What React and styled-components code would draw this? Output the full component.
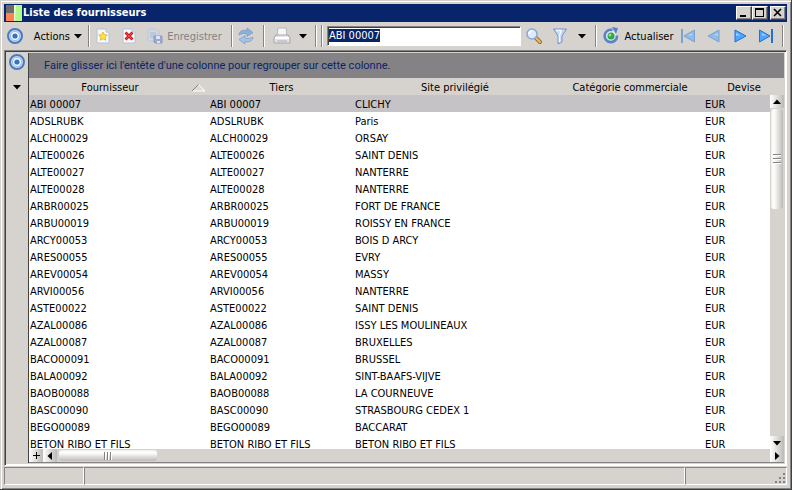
import { createGlobalStyle, styled } from "styled-components";

const PageStyle = createGlobalStyle`
  *, *::before, *::after {
    box-sizing: border-box;
  }
  body {
    margin: 0;
    background: #d6d3ce;
  }
  button, input, table {
    font: inherit;
    color: inherit;
  }
  button {
    padding: 0;
    border: 0;
    background: none;
  }
`

const Window = styled.div`
  display: flex;
  flex-direction: column;
  height: 100vh;
  padding: 4px;
  background: #d6d3ce;
  border-right: 1px solid #424142;
  border-bottom: 1px solid #424142;
  box-shadow: inset 1px 1px 0 #d6d3ce, inset 2px 2px 0 #fff, inset -1px -1px 0 #848284;
  font-family: "DejaVu Sans Condensed", Tahoma, "DejaVu Sans", sans-serif;
  font-size: 11px;
  line-height: 17px;
  color: #000;
`

const TitleBar = styled.header`
  display: flex;
  align-items: center;
  flex: none;
  height: 18px;
  padding: 0 1px 0 2px;
  background: #08246b;
  color: #fff;
  h1 {
    flex: 1;
    margin: 0 0 0 1px;
    font-size: 11px;
    line-height: 18px;
  }
`

const CaptionButton = styled.button`
  display: flex;
  width: 16px;
  height: 14px;
  margin-left: ${({ $apart }) => ($apart ? "2px" : "0")};
  background: #d6d3ce;
  border: 1px solid;
  border-color: #fff #424142 #424142 #fff;
  box-shadow: inset -1px -1px 0 #848284;
`

const ToolBar = styled.div`
  display: flex;
  align-items: center;
  flex: none;
  height: 28px;
  padding: 0 0 0 2px;
`

const ToolButton = styled.button`
  display: flex;
  align-items: center;
  justify-content: ${({ $end }) => ($end ? "flex-end" : "center")};
  flex: none;
  gap: 4px;
  min-width: ${({ $width }) => $width || 18}px;
  height: ${({ $small }) => ($small ? 18 : 22)}px;
  padding-right: ${({ $end }) => ($end ? 6 : 0)}px;
  white-space: nowrap;
  color: ${({ disabled }) => (disabled ? "#848284" : "#000")};
`

const Separator = styled.span`
  flex: none;
  width: 2px;
  height: 22px;
  margin: 0 ${({ $space }) => $space}px;
  border-left: 1px solid #848284;
  border-right: 1px solid #fff;
`

const SearchBox = styled.input`
  flex: 1;
  min-width: 60px;
  height: 20px;
  padding: 0 1px 2px;
  border: 1px solid;
  border-color: #848284 #fff #fff #848284;
  border-radius: 0;
  outline: 0;
  background: #fff;
  box-shadow: inset 1px 1px 0 #424142;
  &::selection {
    background: #08246b;
    color: #fff;
  }
`

const Panel = styled.main`
  display: flex;
  flex: 1;
  min-height: 0;
  border: 1px solid;
  border-color: #848284 #fff #fff #848284;
  box-shadow: inset 1px 1px 0 #424142, inset -1px -1px 0 #fff;
  padding: 2px 2px 2px 1px;
`

const SideStrip = styled.aside`
  display: flex;
  flex-direction: column;
  gap: 7px;
  flex: none;
  width: 23px;
  border-right: 1px solid #424142;
`

const Grid = styled.section`
  display: flex;
  flex-direction: column;
  flex: 1;
  min-width: 0;
`

const GroupBar = styled.div`
  flex: none;
  height: 25px;
  padding: 0 15px;
  line-height: 26px;
  background: #848284;
  color: #08246b;
  font-family: Roboto, "Liberation Sans", sans-serif;
`

const GridBody = styled.div`
  display: grid;
  flex: 1;
  min-height: 0;
  grid-template-columns: minmax(0, 1fr) 14px;
  grid-template-rows: 17px minmax(0, 1fr) 14px;
`

const TableArea = styled.div`
  grid-area: 1 / 1 / 3 / 3;
  overflow: hidden;
  background: #fff;
`

const Table = styled.table`
  width: 100%;
  table-layout: fixed;
  border-collapse: collapse;
  th, td {
    height: 17px;
    padding: 2px 1px 0;
    line-height: 15px;
    white-space: nowrap;
  }
  th {
    background: #d6d3ce;
    font-weight: normal;
  }
`

const Row = styled.tr`
  background: ${({ $selected }) => ($selected ? "#c6c3c6" : "#fff")};
`

const SortHeader = styled.div`
  display: flex;
  align-items: center;
  span {
    flex: 1;
  }
`

const VScroll = styled.div`
  grid-area: 2 / 2 / 3 / 3;
  display: flex;
  flex-direction: column;
  background: #d6d3ce;
`

const HScroll = styled.div`
  grid-area: 3 / 1 / 4 / 3;
  display: flex;
  background: #d6d3ce;
  border-bottom: 1px solid #848284;
`

const ScrollButton = styled.button`
  display: flex;
  align-items: center;
  justify-content: center;
  flex: none;
  width: 14px;
  height: 13px;
  background: linear-gradient(90deg, #fff, #bdbab5);
`

const Thumb = styled.div`
  display: flex;
  flex-direction: ${({ $vertical }) => ($vertical ? "column" : "row")};
  align-items: center;
  justify-content: center;
  gap: ${({ $vertical }) => ($vertical ? "2px" : "1px")};
  flex: none;
  width: ${({ $vertical }) => ($vertical ? "12px" : "98px")};
  height: ${({ $vertical }) => ($vertical ? "100px" : "11px")};
  margin: ${({ $vertical }) => ($vertical ? "1px 1px auto" : "1px auto 1px 2px")};
  border-radius: 3px;
  background: linear-gradient(${({ $vertical }) => ($vertical ? "90deg" : "180deg")}, #efefea, #fff 25%, #bdbab5);
  i {
    width: ${({ $vertical }) => ($vertical ? "8px" : "2px")};
    height: ${({ $vertical }) => ($vertical ? "2px" : "8px")};
    background: linear-gradient(${({ $vertical }) => ($vertical ? "180deg" : "90deg")}, #848284 50%, #fff 50%);
  }
`

const StatusBar = styled.footer`
  display: grid;
  grid-template-columns: 80px 1fr 102px;
  flex: none;
  height: 18px;
  margin-top: 1px;
`

const StatusCell = styled.div`
  display: flex;
  align-items: flex-end;
  justify-content: flex-end;
  border: 1px solid;
  border-color: #848284 #fff #fff #848284;
`

const AppLogo = () => (
  <svg width="16" height="16" viewBox="0 0 16 16">
    <path fill="#6b6b6b" d="M0 0h8v8H0z" />
    <path fill="#ff8252" d="M0 8h8v8H0z" />
    <path fill="#b5f78c" d="M8 0h8v16H8z" />
    <path fill="#e7ffce" d="M8 0h2L9 16H8z" />
  </svg>
)

const Target = () => (
  <svg width="18" height="18" viewBox="0 0 18 18">
    <circle cx="9" cy="9" r="7" fill="#c6dbf7" stroke="#4a79bd" strokeWidth="2" />
    <circle cx="9" cy="9" r="4.6" fill="#eff7ff" stroke="#9cbae7" />
    <circle cx="9" cy="9" r="2.6" fill="#3971bd" />
  </svg>
)

// small black triangle used by menus and scroll bars
const Caret = ({ dir = "down", size = 8 }) => {
  const turn = { down: 0, left: 90, up: 180, right: 270 }[dir]
  return (
    <svg width={size} height={size} viewBox="0 0 8 8">
      <path d="M0 2h8L4 6.500z" transform={`rotate(${turn} 4 4)`} />
    </svg>
  )
}

const NewIcon = () => (
  <svg width="16" height="16" viewBox="0 0 16 16">
    <path d="M2 1h9l3 3v11H2z" fill="#f3f8fe" stroke="#b5c3d6" />
    <path d="M11 1v3h3" fill="#dce7f5" stroke="#b5c3d6" />
    <path d="m8 4 1.300 2.700 3 .4-2.200 2.100.6 3L8 10.800l-2.700 1.400.6-3-2.200-2.100 3-.4z" fill="#ffe442" stroke="#e0b020" strokeWidth=".8" />
  </svg>
)

const DeleteIcon = () => (
  <svg width="16" height="16" viewBox="0 0 16 16">
    <path d="M2 1h9l3 3v11H2z" fill="#f3f8fe" stroke="#b5c3d6" />
    <path d="M11 1v3h3" fill="#dce7f5" stroke="#b5c3d6" />
    <path d="m4.500 4.500 7 7m0-7-7 7" stroke="#ce1818" strokeWidth="2.800" />
    <path d="m5 5 6 6m0-6-6 6" stroke="#f75a52" strokeWidth=".8" />
  </svg>
)

const SaveIcon = () => (
  <svg width="16" height="16" viewBox="0 0 16 16">
    <path d="M1 1h8l3 3v9H1z" fill="#ced7e7" stroke="#bdc7d9" />
    <path d="M3 5h6M3 7h6M3 9h5" stroke="#adb8cc" />
    <path d="M7 8h8v7H8l-1-1z" fill="#9ca9ce" stroke="#8c9ac0" />
    <path d="M9 8h4v3H9zM10 13h3v2h-3z" fill="#dee3f0" />
  </svg>
)

const SyncIcon = () => (
  <svg width="18" height="18" viewBox="0 0 18 18">
    <path d="M2 8C2 4 6 2.500 10 3.500V1l6 4.500-6 4V7C7 6 5 6.500 2 8z" fill="#8cb0dc" stroke="#7399c9" strokeWidth=".7" />
    <path d="M16 10c0 4-4 5.500-8 4.500V17l-6-4.500 6-4V11c3 1 5 .5 8-1z" fill="#a5c3e7" stroke="#7399c9" strokeWidth=".7" />
  </svg>
)

const PrintIcon = () => (
  <svg width="18" height="18" viewBox="0 0 18 18">
    <path d="M5 1h8l1 8H4z" fill="#f7f7f7" stroke="#b5b6bd" />
    <path d="M3 8h12l2 3v5H1v-5z" fill="#e4e4e7" stroke="#a5a5ad" />
    <path d="M2 11h14" stroke="#fff" strokeWidth="2" />
    <path d="M4 14h10" stroke="#adaeb5" />
  </svg>
)

const SearchIcon = () => (
  <svg width="18" height="18" viewBox="0 0 18 18">
    <path d="m10 10 5 5" stroke="#8c7142" strokeWidth="4" strokeLinecap="round" />
    <path d="m11 11 4 4" stroke="#efbe5a" strokeWidth="2" strokeLinecap="round" />
    <circle cx="7" cy="7" r="5" fill="#dcebfb" stroke="#8ca6d6" strokeWidth="1.500" />
    <path d="M4 7c0-2 1-3 3-3" fill="none" stroke="#fff" strokeWidth="1.500" />
  </svg>
)

const FilterIcon = () => (
  <svg width="16" height="18" viewBox="0 0 16 18">
    <path d="M1.500 2h13L10 9v6l-4 2V9z" fill="#c3d8f5" stroke="#7394ce" />
    <path d="M4 3.500h5L7.500 9v6" fill="none" stroke="#f2f8ff" strokeWidth="1.500" />
  </svg>
)

const RefreshIcon = () => (
  <svg width="18" height="18" viewBox="0 0 18 18">
    <path d="M10.500 3A6.200 6.200 0 1 0 15 8.500" fill="#dce9f8" stroke="#5a82c6" strokeWidth="2.600" />
    <path d="m10 0 6 1-2 6z" fill="#5a82c6" />
    <circle cx="9" cy="9" r="3.500" fill="#31a642" />
    <circle cx="8" cy="8" r="1.500" fill="#8ce384" />
  </svg>
)

const NavIcon = ({ back, bar, faded }) => (
  <svg width="16" height="16" viewBox="0 0 16 16" opacity={faded ? 0.5 : 1}>
    <g transform={back ? "matrix(-1 0 0 1 16 0)" : undefined}>
      <path d={bar ? "M1.500 2 12 8 1.500 14z" : "M3 2l11 6-11 6z"} fill="#4aa6ff" stroke="#2171d6" />
      <path d="M4 5l4.500 2.500H4z" fill="#a5d3ff" />
      {bar && <path d="M14 1v14" stroke="#2171d6" strokeWidth="2" />}
    </g>
  </svg>
)

const columns = [
  { title: "Fournisseur", width: "180px" },
  { title: "Tiers", width: "145px" },
  { title: "Site privilégié" },
  { title: "Catégorie commerciale", width: "148px" },
  { title: "Devise", width: "80px" },
]

const suppliers = [
  ["ABI 00007", "CLICHY"],
  ["ADSLRUBK", "Paris"],
  ["ALCH00029", "ORSAY"],
  ["ALTE00026", "SAINT DENIS"],
  ["ALTE00027", "NANTERRE"],
  ["ALTE00028", "NANTERRE"],
  ["ARBR00025", "FORT DE FRANCE"],
  ["ARBU00019", "ROISSY EN FRANCE"],
  ["ARCY00053", "BOIS D ARCY"],
  ["ARES00055", "EVRY"],
  ["AREV00054", "MASSY"],
  ["ARVI00056", "NANTERRE"],
  ["ASTE00022", "SAINT DENIS"],
  ["AZAL00086", "ISSY LES MOULINEAUX"],
  ["AZAL00087", "BRUXELLES"],
  ["BACO00091", "BRUSSEL"],
  ["BALA00092", "SINT-BAAFS-VIJVE"],
  ["BAOB00088", "LA COURNEUVE"],
  ["BASC00090", "STRASBOURG CEDEX 1"],
  ["BEGO00089", "BACCARAT"],
  ["BETON RIBO ET FILS", "BETON RIBO ET FILS"],
]

const selectOnMount = (input) => {
  if (input) {
    input.focus()
    input.select()
  }
}

const App = () => {
  return (
    <>
      <PageStyle />
      <Window>
        <TitleBar>
          <AppLogo />
          <h1>Liste des fournisseurs</h1>
          <CaptionButton aria-label="Réduire">
            <svg width="14" height="12"><path d="M3 8h6v2H3z" /></svg>
          </CaptionButton>
          <CaptionButton aria-label="Agrandir">
            <svg width="14" height="12"><path d="M2 1h9v9H2zM3 3v6h7V3z" fillRule="evenodd" /></svg>
          </CaptionButton>
          <CaptionButton $apart aria-label="Fermer">
            <svg width="14" height="12"><path d="m3 2 7 7m0-7-7 7" stroke="#000" strokeWidth="1.600" /></svg>
          </CaptionButton>
        </TitleBar>
        <ToolBar>
          <ToolButton aria-label="Cible"><Target /></ToolButton>
          <ToolButton $width={64} $end>Actions <Caret /></ToolButton>
          <Separator $space={0} />
          <ToolButton $width={26} aria-label="Nouveau"><NewIcon /></ToolButton>
          <ToolButton $width={26} aria-label="Supprimer"><DeleteIcon /></ToolButton>
          <ToolButton $width={85} disabled><SaveIcon />Enregistrer</ToolButton>
          <Separator $space={4} />
          <ToolButton disabled aria-label="Synchroniser"><SyncIcon /></ToolButton>
          <Separator $space={8} />
          <ToolButton aria-label="Imprimer"><PrintIcon /></ToolButton>
          <ToolButton $width={24} aria-label="Options d'impression"><Caret /></ToolButton>
          <Separator $space={0} />
          <Separator $space={4} />
          <SearchBox ref={selectOnMount} aria-label="Rechercher" defaultValue="ABI 00007" />
          <ToolButton $width={26} aria-label="Lancer la recherche"><SearchIcon /></ToolButton>
          <ToolButton $width={26} aria-label="Filtrer"><FilterIcon /></ToolButton>
          <ToolButton aria-label="Options de filtre"><Caret /></ToolButton>
          <Separator $space={4} />
          <ToolButton $width={74}><RefreshIcon />Actualiser</ToolButton>
          <ToolButton $width={26} disabled aria-label="Premier"><NavIcon back bar faded /></ToolButton>
          <ToolButton $width={26} disabled aria-label="Précédent"><NavIcon back faded /></ToolButton>
          <ToolButton $width={26} aria-label="Suivant"><NavIcon /></ToolButton>
          <ToolButton $width={26} aria-label="Dernier"><NavIcon bar /></ToolButton>
          <Separator $space={3} />
        </ToolBar>
        <Panel>
          <SideStrip>
            <ToolButton $small aria-label="Cible du panneau"><Target /></ToolButton>
            <ToolButton $small aria-label="Afficher le menu"><Caret /></ToolButton>
          </SideStrip>
          <Grid>
            <GroupBar>Faire glisser ici l'entête d'une colonne pour regrouper sur cette colonne.</GroupBar>
            <GridBody>
              <TableArea>
                <Table>
                  <colgroup>
                    {columns.map(({ title, width }) => <col key={title} width={width} />)}
                  </colgroup>
                  <thead>
                    <tr>
                      {columns.map(({ title }, i) => (
                        <th key={title} scope="col">
                          {i === 0 ? (
                            <SortHeader>
                              <span>{title}</span>
                              <svg width="18" height="10"><path d="M2 8 8.500 1.500 15 8z" fill="#dedbd6" stroke="#fff" /><path d="M2 8 8.500 1.500" stroke="#848284" /></svg>
                            </SortHeader>
                          ) : title}
                        </th>
                      ))}
                    </tr>
                  </thead>
                  <tbody>
                    {suppliers.map(([name, city], i) => (
                      <Row key={name} $selected={i === 0}>
                        <td>{name}</td>
                        <td>{name}</td>
                        <td>{city}</td>
                        <td />
                        <td>EUR</td>
                      </Row>
                    ))}
                  </tbody>
                </Table>
              </TableArea>
              <VScroll>
                <ScrollButton aria-label="Monter"><Caret dir="up" /></ScrollButton>
                <Thumb $vertical><i /><i /><i /></Thumb>
                <ScrollButton aria-label="Descendre"><Caret /></ScrollButton>
              </VScroll>
              <HScroll>
                <ScrollButton aria-label="Ajouter">
                  <svg width="7" height="7"><path d="M3 0h1v3h3v1H4v3H3V4H0V3h3z" /></svg>
                </ScrollButton>
                <ScrollButton aria-label="Gauche"><Caret dir="left" /></ScrollButton>
                <Thumb><i /><i /><i /></Thumb>
                <ScrollButton aria-label="Droite"><Caret dir="right" /></ScrollButton>
              </HScroll>
            </GridBody>
          </Grid>
        </Panel>
        <StatusBar>
          <StatusCell />
          <StatusCell />
          <StatusCell>
            <svg width="12" height="12"><path d="M9 1h2v2H9zM5 5h2v2H5zM9 5h2v2H9zM1 9h2v2H1zM5 9h2v2H5zM9 9h2v2H9z" fill="#848284" /></svg>
          </StatusCell>
        </StatusBar>
      </Window>
    </>
  )
}

export default App
